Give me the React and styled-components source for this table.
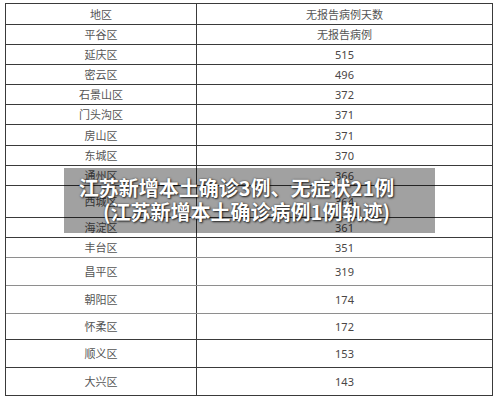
import React from "react";
import styled, { createGlobalStyle } from "styled-components";

const Global = createGlobalStyle`
  html, body { margin: 0; padding: 0; background: #ffffff; }
  body { width: 500px; height: 401px; overflow: hidden; }
`;

const Page = styled.div`
  position: relative;
  width: 500px;
  height: 401px;
  padding: 3px 0 0 5px;
  box-sizing: border-box;
`;

const Table = styled.div`
  width: 488px;
  border-top: 1px solid #3a3a3a;
  border-left: 1px solid #3a3a3a;
  border-right: 1px solid #3a3a3a;
  box-sizing: border-box;
`;

const Row = styled.div`
  display: grid;
  grid-template-columns: 191px 1fr;
  height: ${(p) => p.$h}px;
  border-bottom: 1px solid ${(p) => (p.$light ? "#8e8e8e" : "#3a3a3a")};
  box-sizing: border-box;
`;

const Cell = styled.div`
  display: flex;
  align-items: center;
  justify-content: center;
  font-family: ${(p) =>
    p.$num
      ? '"Noto Sans", "Noto Sans CJK SC", sans-serif'
      : '"Noto Sans CJK SC", "Noto Sans", sans-serif'};
  font-size: 11px;
  color: ${(p) => (p.$num ? "#4a4646" : "#555555")};
  border-right: ${(p) => (p.$first ? "1px solid #3a3a3a" : "none")};
  line-height: 1;
`;

const Overlay = styled.div`
  position: absolute;
  left: 64px;
  top: 168px;
  width: 371px;
  height: 65px;
  background: rgba(0, 0, 0, 0.37);
  display: flex;
  flex-direction: column;
  align-items: center;
  justify-content: center;
  box-sizing: border-box;
  padding-bottom: 2px;
`;

const TitleLine = styled.div`
  font-family: "Noto Sans CJK SC", "Noto Sans", sans-serif;
  font-weight: 700;
  font-size: 20px;
  line-height: 23.5px;
  color: #ffffff;
  white-space: nowrap;
  text-shadow: 1px 1px 2px rgba(0, 0, 0, 0.75), 0 0 2px rgba(0, 0, 0, 0.5);
  margin-right: ${(p) => p.$shift || 0}px;
`;

const rows = [
  { a: "地区", b: "无报告病例天数", h: 21, cnb: true },
  { a: "平谷区", b: "无报告病例", h: 20, cnb: true },
  { a: "延庆区", b: "515", h: 20 },
  { a: "密云区", b: "496", h: 20 },
  { a: "石景山区", b: "372", h: 20 },
  { a: "门头沟区", b: "371", h: 20 },
  { a: "房山区", b: "371", h: 21 },
  { a: "东城区", b: "370", h: 20 },
  { a: "通州区", b: "366", h: 20 },
  { a: "西城区", b: "364", h: 32 },
  { a: "海淀区", b: "361", h: 20 },
  { a: "丰台区", b: "351", h: 20, light: true },
  { a: "昌平区", b: "319", h: 28, light: true },
  { a: "朝阳区", b: "174", h: 28, light: true },
  { a: "怀柔区", b: "172", h: 26 },
  { a: "顺义区", b: "153", h: 28 },
  { a: "大兴区", b: "143", h: 28 },
];

export default function App() {
  return (
    <>
      <Global />
      <Page>
        <Table>
          {rows.map((r, i) => (
            <Row key={i} $h={r.h} $light={r.light}>
              <Cell $first>{r.a}</Cell>
              <Cell $num={!r.cnb}>{r.b}</Cell>
            </Row>
          ))}
        </Table>
        <Overlay>
          <TitleLine $shift={26}>江苏新增本土确诊3例、无症状21例</TitleLine>
          <TitleLine $shift={6}>(江苏新增本土确诊病例1例轨迹)</TitleLine>
        </Overlay>
      </Page>
    </>
  );
}
